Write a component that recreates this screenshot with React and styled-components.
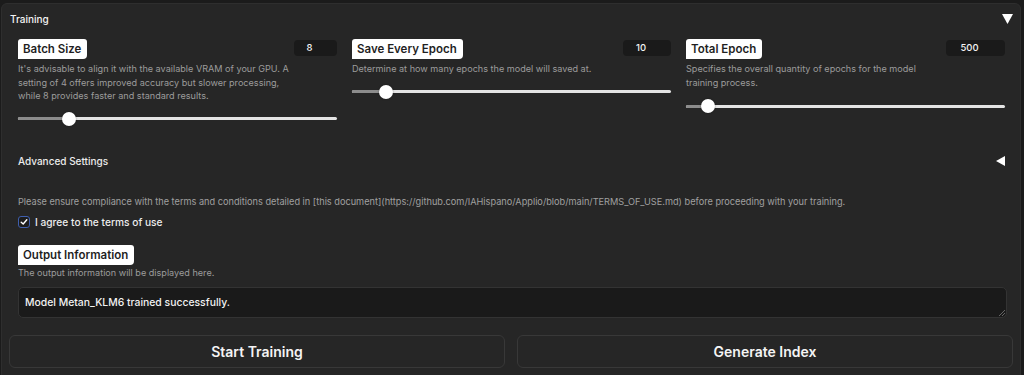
import React from "react";
import styled, { createGlobalStyle } from "styled-components";

const GlobalStyle = createGlobalStyle`
  html, body { margin: 0; padding: 0; background: #1b1b1b; }
  body { font-family: Inter, "Noto Sans", sans-serif; color: #f2f2f2; }
  * { box-sizing: border-box; }
`;

const Page = styled.div`
  padding: 3px 4px 0 1px;
  width: 1024px;
  height: 375px;
  overflow: hidden;
`;

const Panel = styled.div`
  width: 1020px;
  background: #262626;
  border: 1px solid #2e2e2e;
  border-radius: 6px;
  padding: 7px 7px 12px 7px;
`;

const Header = styled.div`
  display: flex;
  justify-content: space-between;
  align-items: center;
  height: 16px;
  padding-left: 1px;
  margin-bottom: 12px;
`;

const HeaderTitle = styled.span`
  font-size: 10px;
  font-weight: 500;
  color: #f4f4f4;
`;

const Inner = styled.div`
  padding: 0 7px 0 9px;
`;

const Columns = styled.div`
  display: grid;
  grid-template-columns: repeat(3, 319px);
  column-gap: 15px;
`;

const Column = styled.div`
  display: flex;
  flex-direction: column;
`;

const LabelRow = styled.div`
  display: flex;
  justify-content: space-between;
  align-items: flex-start;
`;

const Label = styled.span`
  display: inline-block;
  height: 20px;
  line-height: 20px;
  padding: 0 6px 0 5px;
  background: #ffffff;
  color: #1f1f1f;
  font-size: 11.5px;
  font-weight: 600;
  border-radius: 3px 3px 4px 0;
`;

const NumberBox = styled.div`
  width: ${(p) => p.$w}px;
  height: 16px;
  margin-top: 1px;
  background: #1a1a1a;
  border-radius: 4px;
  padding-right: 12px;
  font-size: 9.5px;
  font-weight: 500;
  color: #f4f4f4;
  text-align: center;
  line-height: 16px;
`;

const Desc = styled.p`
  margin: 3px 0 0 0;
  font-size: 9.1px;
  line-height: 13.5px;
  color: #9c9c9c;
  max-width: ${(p) => p.$max || 319}px;
`;

const SliderWrap = styled.div`
  position: relative;
  height: 14px;
  margin-top: ${(p) => p.$mt || 9}px;
`;

const Track = styled.div`
  position: absolute;
  left: 0;
  right: 0;
  top: 5.5px;
  height: 3px;
  border-radius: 2px;
  background: #e4e4e4;
`;

const Filled = styled.div`
  position: absolute;
  left: 0;
  top: 0;
  bottom: 0;
  border-radius: 2px;
  background: #8c8c8c;
`;

const Thumb = styled.div`
  position: absolute;
  top: 0;
  width: 14px;
  height: 14px;
  margin-left: -7px;
  border-radius: 50%;
  background: #ffffff;
  box-shadow: 0 0 2px rgba(0, 0, 0, 0.4);
`;

const AdvancedRow = styled.div`
  display: flex;
  justify-content: space-between;
  align-items: center;
  height: 16px;
  margin-top: 27px;
  padding-right: 1px;
`;

const AdvancedTitle = styled.span`
  font-size: 10px;
  font-weight: 500;
  color: #ececec;
`;

const Terms = styled.p`
  margin: 27px 0 0 0;
  font-size: 9.2px;
  line-height: 12px;
  color: #a0a0a0;
  white-space: nowrap;
`;

const CheckRow = styled.label`
  display: flex;
  align-items: center;
  gap: 5px;
  margin-top: 8px;
  height: 12px;
`;

const CheckBox = styled.span`
  width: 12px;
  height: 12px;
  border: 1px solid #3f5fae;
  border-radius: 3px;
  background: #1d1d1d;
  display: flex;
  align-items: center;
  justify-content: center;
`;

const CheckText = styled.span`
  font-size: 10.2px;
  font-weight: 500;
  color: #ededed;
`;

const OutputLabelRow = styled.div`
  margin-top: 15px;
`;

const OutputDesc = styled.p`
  margin: 2px 0 0 0;
  font-size: 9.1px;
  line-height: 12px;
  color: #9c9c9c;
`;

const TextArea = styled.div`
  position: relative;
  margin-top: 8px;
  width: 989px;
  height: 31px;
  background: #1a1a1a;
  border: 1px solid #333;
  border-radius: 5px;
  padding: 0 6px;
  display: flex;
  align-items: center;
  font-size: 10.4px;
  font-weight: 500;
  color: #f2f2f2;
`;

const Resize = styled.svg`
  position: absolute;
  right: 1px;
  bottom: 1px;
`;

const ButtonRow = styled.div`
  display: grid;
  grid-template-columns: 1fr 1fr;
  column-gap: 12px;
  margin-top: 17px;
`;

const Button = styled.button`
  height: 33px;
  background: #262626;
  border: 1px solid #383838;
  border-radius: 6px;
  color: #f4f4f4;
  font-family: Inter, "Noto Sans", sans-serif;
  font-size: 14px;
  font-weight: 600;
  cursor: pointer;
`;

const Triangle = ({ dir }) =>
  dir === "down" ? (
    <svg width="11" height="10" viewBox="0 0 11 10">
      <polygon points="0,0 11,0 5.5,10" fill="#fff" />
    </svg>
  ) : (
    <svg width="9" height="10" viewBox="0 0 9 10">
      <polygon points="9,0 9,10 0,5" fill="#fff" />
    </svg>
  );

const Slider = ({ pct, mt }) => (
  <SliderWrap $mt={mt}>
    <Track>
      <Filled style={{ width: `${pct}%` }} />
    </Track>
    <Thumb style={{ left: `${pct}%` }} />
  </SliderWrap>
);

const fields = [
  {
    label: "Batch Size",
    value: "8",
    w: 43,
    desc:
      "It's advisable to align it with the available VRAM of your GPU. A setting of 4 offers improved accuracy but slower processing, while 8 provides faster and standard results.",
    max: 274,
    pct: 16,
    mt: 9,
  },
  {
    label: "Save Every Epoch",
    value: "10",
    w: 48,
    desc: "Determine at how many epochs the model will saved at.",
    max: 319,
    pct: 10.6,
    mt: 9,
  },
  {
    label: "Total Epoch",
    value: "500",
    w: 59,
    desc: "Specifies the overall quantity of epochs for the model training process.",
    max: 245,
    pct: 7,
    mt: 10,
  },
];

export default function App() {
  return (
    <>
      <GlobalStyle />
      <Page>
        <Panel>
          <Header>
            <HeaderTitle>Training</HeaderTitle>
            <Triangle dir="down" />
          </Header>
          <Inner>
            <Columns>
              {fields.map((f) => (
                <Column key={f.label}>
                  <LabelRow>
                    <Label>{f.label}</Label>
                    <NumberBox $w={f.w}>{f.value}</NumberBox>
                  </LabelRow>
                  <Desc $max={f.max}>{f.desc}</Desc>
                  <Slider pct={f.pct} mt={f.mt} />
                </Column>
              ))}
            </Columns>
            <AdvancedRow>
              <AdvancedTitle>Advanced Settings</AdvancedTitle>
              <Triangle dir="left" />
            </AdvancedRow>
            <Terms>
              Please ensure compliance with the terms and conditions detailed in [this
              document](https://github.com/IAHispano/Applio/blob/main/TERMS_OF_USE.md)
              before proceeding with your training.
            </Terms>
            <CheckRow>
              <CheckBox>
                <svg width="8" height="8" viewBox="0 0 8 8">
                  <polyline
                    points="1.2,4.2 3.2,6 6.8,1.8"
                    fill="none"
                    stroke="#fff"
                    strokeWidth="1.4"
                    strokeLinecap="round"
                    strokeLinejoin="round"
                  />
                </svg>
              </CheckBox>
              <CheckText>I agree to the terms of use</CheckText>
            </CheckRow>
            <OutputLabelRow>
              <Label>Output Information</Label>
            </OutputLabelRow>
            <OutputDesc>The output information will be displayed here.</OutputDesc>
            <TextArea>
              Model Metan_KLM6 trained successfully.
              <Resize width="6" height="6" viewBox="0 0 6 6">
                <line x1="0" y1="6" x2="6" y2="0" stroke="#777" strokeWidth="0.8" />
                <line x1="3" y1="6" x2="6" y2="3" stroke="#777" strokeWidth="0.8" />
              </Resize>
            </TextArea>
          </Inner>
          <ButtonRow>
            <Button>Start Training</Button>
            <Button>Generate Index</Button>
          </ButtonRow>
        </Panel>
      </Page>
    </>
  );
}
